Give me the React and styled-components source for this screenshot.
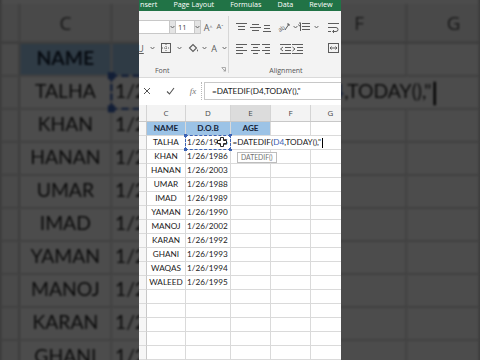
import React from 'react';
import styled, { createGlobalStyle } from 'styled-components';

const GlobalStyle = createGlobalStyle`
  html, body { margin: 0; padding: 0; background: #3b3b3b; }
  body { width: 480px; height: 360px; overflow: hidden; font-family: Lato, "Liberation Sans", sans-serif; }
`;

const UI_FONT = `"Open Sans", "Noto Sans", "Liberation Sans", sans-serif`;
const CELL_FONT = `Lato, "Liberation Sans", sans-serif`;
const GREEN = '#217346';
const ICON = '#5c5c5c';
const REF = '#3c63b4';

const TABS = ['nsert', 'Page Layout', 'Formulas', 'Data', 'Review'];
const COLS = [
  { key: 'h', w: 8 },
  { key: 'C', w: 39 },
  { key: 'D', w: 45 },
  { key: 'E', w: 40 },
  { key: 'F', w: 40 },
  { key: 'G', w: 40 },
];
const PEOPLE = [
  ['TALHA', '1/26/1985'],
  ['KHAN', '1/26/1986'],
  ['HANAN', '1/26/2003'],
  ['UMAR', '1/26/1988'],
  ['IMAD', '1/26/1989'],
  ['YAMAN', '1/26/1990'],
  ['MANOJ', '1/26/2002'],
  ['KARAN', '1/26/1992'],
  ['GHANI', '1/26/1993'],
  ['WAQAS', '1/26/1994'],
  ['WALEED', '1/26/1995'],
];
const EMPTY_ROWS = 7;

/* ---------- page frame ---------- */
const Stage = styled.div`
  position: relative;
  width: 480px;
  height: 360px;
  overflow: hidden;
  background: #3b3b3b;
  display: flex;
  justify-content: center;
`;

const Backdrop = styled.div`
  position: absolute;
  inset: 0;
  display: flex;
  justify-content: center;
  filter: brightness(0.3) blur(1.3px);
  pointer-events: none;
`;

const Zoomed = styled.div`
  transform-origin: 101px 179.4px;
  transform: scale(2.36);
`;

const Front = styled.div`
  position: relative;
  z-index: 1;
`;

/* ---------- sheet ---------- */
const SheetBox = styled.div`
  width: 202px;
  height: 360px;
  overflow: hidden;
  background: #fff;
  display: flex;
  flex-direction: column;
`;

const TabBar = styled.div`
  flex: none;
  height: 11px;
  background: ${GREEN};
  display: flex;
  align-items: flex-start;
  gap: 16px;
  padding-left: 1px;
  overflow: hidden;
`;

const Tab = styled.span`
  flex: none;
  font-family: ${UI_FONT};
  font-size: 7.2px;
  line-height: 8px;
  color: #fff;
  white-space: nowrap;
`;

const Ribbon = styled.div`
  flex: none;
  height: 67px;
  background: #f3f3f3;
  border-bottom: 1px solid #dadada;
  box-sizing: border-box;
  display: flex;
`;

const Group = styled.div`
  flex: none;
  width: ${(p) => p.$w}px;
  display: flex;
  flex-direction: column;
  padding-top: 9px;
  box-sizing: border-box;
  position: relative;
`;

const GroupRule = styled.div`
  flex: none;
  width: 1px;
  margin: 5px 0 4px;
  background: #d6d6d6;
`;

const ToolRow = styled.div`
  display: flex;
  align-items: center;
  height: 14px;
  margin-top: ${(p) => p.$mt || 0}px;
  padding-left: ${(p) => p.$pl || 0}px;
`;

const GroupLabel = styled.div`
  margin-top: 11px;
  height: 10px;
  line-height: 10px;
  font-family: ${UI_FONT};
  font-size: 7px;
  color: #555;
  padding-left: ${(p) => p.$pl || 0}px;
  text-align: ${(p) => (p.$center ? 'center' : 'left')};
`;

const Launcher = styled.span`
  position: absolute;
  right: 2px;
  bottom: 5px;
  display: flex;
`;

const InputBox = styled.div`
  flex: none;
  width: ${(p) => p.$w}px;
  height: 14px;
  box-sizing: border-box;
  background: #fff;
  border: 1px solid #c8c8c8;
  border-left: ${(p) => (p.$open ? 'none' : '1px solid #c8c8c8')};
  font-family: ${UI_FONT};
  font-size: 7.5px;
  line-height: 12px;
  padding-left: 2px;
  color: #444;
`;

const DropBtn = styled.div`
  flex: none;
  width: 6px;
  height: 14px;
  box-sizing: border-box;
  background: #e4e4e4;
  border: 1px solid #c8c8c8;
  border-left: none;
  display: flex;
  align-items: center;
  justify-content: center;
`;

const Slot = styled.div`
  flex: none;
  width: ${(p) => p.$w}px;
  margin-left: ${(p) => p.$ml || 0}px;
  height: 14px;
  display: flex;
  align-items: center;
  justify-content: center;
  color: ${ICON};
  font-family: ${UI_FONT};
`;

const Glyph = styled.span`
  font-size: ${(p) => p.$size}px;
  line-height: 1;
  color: ${ICON};
  text-decoration: ${(p) => (p.$under ? 'underline' : 'none')};
`;

const FormulaBar = styled.div`
  flex: none;
  height: 25px;
  display: flex;
  align-items: center;
  background: #fff;
`;

const FxDivider = styled.div`
  flex: none;
  width: 0;
  height: 18px;
  border-left: 1px dotted #b8b8b8;
`;

const FxLabel = styled.span`
  font-family: "Liberation Serif", serif;
  font-style: italic;
  font-size: 9px;
  color: #777;
`;

const FxInput = styled.div`
  flex: 1;
  height: 18px;
  margin-left: 2px;
  box-sizing: border-box;
  border: 1px solid #c8c8c8;
  border-right: none;
  background: #fff;
  font-family: ${CELL_FONT};
  font-size: 8.2px;
  line-height: 16px;
  padding-left: 7px;
  color: #1a1a1a;
  white-space: nowrap;
`;

const HeaderRow = styled.div`
  flex: none;
  display: flex;
  height: 17px;
  margin-top: 2px;
  background: #f3f3f3;
  border-bottom: 1px solid #c8c8c8;
  box-sizing: border-box;
`;

const HeadCell = styled.div`
  flex: none;
  width: ${(p) => p.$w}px;
  box-sizing: border-box;
  border-right: 1px solid #d4d4d4;
  background: ${(p) => (p.$active ? '#dcdcdc' : 'transparent')};
  text-align: center;
  font-family: ${UI_FONT};
  font-size: 8px;
  line-height: 16px;
  color: #4a4a4a;
`;

const Row = styled.div`
  flex: none;
  display: flex;
  height: 14px;
`;

const Cell = styled.div`
  flex: none;
  position: relative;
  width: ${(p) => p.$w}px;
  height: 14px;
  box-sizing: border-box;
  border-right: 1px solid ${(p) => (p.$head ? '#c8c8c8' : '#dadada')};
  border-bottom: 1px solid #dadada;
  background: ${(p) => (p.$fill ? p.$fill : p.$head ? '#f6f6f6' : '#fff')};
  font-family: ${CELL_FONT};
  font-size: 8.2px;
  line-height: 13px;
  font-weight: ${(p) => (p.$bold ? 700 : 400)};
  color: ${(p) => (p.$bold ? '#15233a' : '#222')};
  text-align: ${(p) => p.$align || 'left'};
  padding: 0 ${(p) => (p.$align === 'right' ? 3 : 1)}px 0 1px;
  white-space: nowrap;
  box-shadow: ${(p) => (p.$active ? `inset 0 -1px 0 ${GREEN}` : 'none')};
`;

const RefBox = styled.div`
  position: absolute;
  left: -1px;
  top: -1px;
  right: -1px;
  bottom: -1px;
  border: 1px dashed ${REF};
  pointer-events: none;
  z-index: 2;
`;

const Handle = styled.span`
  position: absolute;
  width: 3px;
  height: 3px;
  background: ${REF};
  ${(p) => (p.$top ? 'top: -2px;' : 'bottom: -2px;')}
  ${(p) => (p.$left ? 'left: -2px;' : 'right: -2px;')}
`;

const CursorMark = styled.span`
  position: absolute;
  left: 31px;
  top: 1px;
  z-index: 4;
  display: flex;
`;

const EditText = styled.div`
  position: absolute;
  left: 0;
  top: 0;
  height: 13px;
  padding-left: 1.5px;
  padding-right: 1px;
  background: #fff;
  z-index: 3;
  white-space: nowrap;
  display: flex;
  align-items: center;
  line-height: 13px;
`;

const RefText = styled.span`
  color: ${REF};
`;

const TextCaret = styled.span`
  display: inline-block;
  width: 1px;
  height: 10px;
  margin-left: 1px;
  background: #000;
`;

const Tooltip = styled.div`
  position: absolute;
  left: 6px;
  top: 16px;
  z-index: 5;
  padding: 0 3px;
  height: 11px;
  box-sizing: border-box;
  background: #fff;
  border: 1px solid #bdbdbd;
  font-family: ${CELL_FONT};
  font-size: 6.8px;
  line-height: 9px;
  color: #6f6f6f;
`;

/* ---------- icons ---------- */
const Caret = () => (
  <svg width="5" height="4" viewBox="0 0 5 4">
    <path d="M0.6 1 L2.5 3 L4.4 1" fill="none" stroke="#666" strokeWidth="1" />
  </svg>
);

const Lines = ({ rows, w = 11, h = 11 }) => (
  <svg width={w} height={h} viewBox={`0 0 ${w} ${h}`}>
    {rows.map(([y, x1, x2], i) => (
      <line key={i} x1={x1} y1={y + 0.5} x2={x2} y2={y + 0.5} stroke={ICON} strokeWidth="1" />
    ))}
  </svg>
);

const BordersIcon = () => (
  <svg width="10" height="10" viewBox="0 0 10 10">
    <rect x="0.5" y="0.5" width="9" height="9" fill="none" stroke={ICON} strokeWidth="1" />
    <line x1="5" y1="1" x2="5" y2="9" stroke={ICON} strokeWidth="0.9" strokeDasharray="1 1" />
    <line x1="1" y1="5" x2="9" y2="5" stroke={ICON} strokeWidth="0.9" strokeDasharray="1 1" />
  </svg>
);

const BucketIcon = () => (
  <svg width="11" height="10" viewBox="0 0 11 10">
    <path d="M1.5 5 L5 1.5 L8.5 5 L5 8.5 Z" fill="none" stroke={ICON} strokeWidth="1.1" />
    <path d="M9.5 6 Q10.7 7.7 9.5 8.7 Q8.3 7.7 9.5 6 Z" fill={ICON} />
  </svg>
);

const LauncherIcon = () => (
  <svg width="5" height="5" viewBox="0 0 5 5">
    <path d="M0.5 0.5 H4.5 V4.5" fill="none" stroke="#999" strokeWidth="0.8" />
    <path d="M1 1 L4 4 M2.5 4 H4 V2.5" fill="none" stroke="#999" strokeWidth="0.8" />
  </svg>
);

const OrientIcon = () => (
  <svg width="12" height="10" viewBox="0 0 12 10">
    <text x="0" y="9" fontSize="6" fill={ICON} fontFamily="Open Sans" transform="rotate(-35 3 7)">ab</text>
    <path d="M7 8 L11 2 M9 2 H11 V4" fill="none" stroke={ICON} strokeWidth="1" />
  </svg>
);

const IndentIcon = ({ dir }) => (
  <svg width="11" height="11" viewBox="0 0 11 11">
    <line x1="0" y1="1.5" x2="11" y2="1.5" stroke={ICON} />
    <line x1="5" y1="4.5" x2="11" y2="4.5" stroke={ICON} />
    <line x1="5" y1="7.5" x2="11" y2="7.5" stroke={ICON} />
    <line x1="0" y1="10.5" x2="11" y2="10.5" stroke={ICON} />
    <path d={dir === 'in' ? 'M0.5 4 L3 6 L0.5 8' : 'M3 4 L0.5 6 L3 8'} fill="none" stroke={ICON} strokeWidth="1" />
  </svg>
);

const ParaIcon = () => (
  <svg width="12" height="10" viewBox="0 0 12 10">
    <line x1="4" y1="1.5" x2="12" y2="1.5" stroke={ICON} />
    <line x1="4" y1="4.5" x2="12" y2="4.5" stroke={ICON} />
    <line x1="4" y1="7.5" x2="12" y2="7.5" stroke={ICON} />
    <path d="M2.5 1 V9 M1 1 H3 M0.5 2.5 Q0.5 4 2.5 4" fill="none" stroke={ICON} strokeWidth="1" />
  </svg>
);

const WrapIcon = () => (
  <svg width="11" height="11" viewBox="0 0 11 11">
    <line x1="0" y1="1.5" x2="11" y2="1.5" stroke={ICON} />
    <path d="M0 5.5 H8 Q10 5.5 10 7.5 Q10 9.5 8 9.5 H5" fill="none" stroke={ICON} />
    <path d="M6 8 L4.5 9.5 L6 11" fill="none" stroke={ICON} strokeWidth="1" />
    <line x1="0" y1="9.5" x2="3" y2="9.5" stroke={ICON} />
  </svg>
);

const MergeIcon = () => (
  <svg width="11" height="10" viewBox="0 0 11 10">
    <rect x="0.5" y="0.5" width="10" height="9" fill="none" stroke={ICON} />
    <path d="M2 5 H9 M3.5 3.5 L2 5 L3.5 6.5 M7.5 3.5 L9 5 L7.5 6.5" fill="none" stroke={ICON} strokeWidth="1" />
  </svg>
);

const CloseIcon = () => (
  <svg width="8" height="8" viewBox="0 0 8 8">
    <path d="M1 1 L7 7 M7 1 L1 7" stroke="#555" strokeWidth="1" />
  </svg>
);

const CheckIcon = () => (
  <svg width="9" height="8" viewBox="0 0 9 8">
    <path d="M1 4.5 L3.5 7 L8 1" fill="none" stroke="#555" strokeWidth="1.1" />
  </svg>
);

const FatCross = () => (
  <svg width="10" height="10" viewBox="0 0 10 10">
    <path
      d="M3.5 0.5 H6.5 V3.5 H9.5 V6.5 H6.5 V9.5 H3.5 V6.5 H0.5 V3.5 H3.5 Z"
      fill="#fff"
      stroke="#111"
      strokeWidth="0.9"
    />
  </svg>
);

/* ---------- sheet composition ---------- */
function Ribbons() {
  return (
    <Ribbon>
      <Group $w={89}>
        <ToolRow>
          <InputBox $w={31} $open />
          <DropBtn><Caret /></DropBtn>
          <InputBox $w={19} $open>11</InputBox>
          <DropBtn><Caret /></DropBtn>
          <Slot $w={14}><Glyph $size={9}>A</Glyph><Glyph $size={5}>^</Glyph></Slot>
          <Slot $w={10}><Glyph $size={7.5}>A</Glyph><Glyph $size={5}>ˇ</Glyph></Slot>
        </ToolRow>
        <ToolRow $mt={7}>
          <Slot $w={11} $ml={-4}><Glyph $size={9} $under>U</Glyph></Slot>
          <Slot $w={13}><Caret /></Slot>
          <Slot $w={13}><BordersIcon /></Slot>
          <Slot $w={14}><Caret /></Slot>
          <Slot $w={14}><BucketIcon /></Slot>
          <Slot $w={9}><Caret /></Slot>
          <Slot $w={10}><Glyph $size={9}>A</Glyph></Slot>
          <Slot $w={11}><Caret /></Slot>
        </ToolRow>
        <GroupLabel $pl={16}>Font</GroupLabel>
        <Launcher><LauncherIcon /></Launcher>
      </Group>
      <GroupRule />
      <Group $w={114}>
        <ToolRow $pl={5}>
          <Slot $w={14}><Lines rows={[[1, 0, 11], [4, 2, 9], [7, 2, 9]]} /></Slot>
          <Slot $w={14}><Lines rows={[[2, 2, 9], [5, 0, 11], [8, 2, 9]]} /></Slot>
          <Slot $w={10}><Lines w={8} rows={[[3, 1, 7], [6, 1, 7], [9, 0, 8]]} /></Slot>
          <Slot $w={16} $ml={4}><OrientIcon /></Slot>
          <Slot $w={6}><Caret /></Slot>
          <Slot $w={12}><ParaIcon /></Slot>
          <Slot $w={12}><Caret /></Slot>
          <Slot $w={22}><WrapIcon /></Slot>
        </ToolRow>
        <ToolRow $mt={7} $pl={5}>
          <Slot $w={15}><Lines rows={[[1, 0, 11], [4, 0, 7], [7, 0, 11], [10, 0, 7]]} /></Slot>
          <Slot $w={12}><Lines w={9} rows={[[1, 0, 9], [4, 2, 7], [7, 0, 9], [10, 2, 7]]} /></Slot>
          <Slot $w={10}><Lines w={8} rows={[[1, 0, 8], [4, 3, 8], [7, 0, 8], [10, 3, 8]]} /></Slot>
          <Slot $w={12} $ml={8}><IndentIcon dir="out" /></Slot>
          <Slot $w={12}><IndentIcon dir="in" /></Slot>
          <Slot $w={16} $ml={22}><MergeIcon /></Slot>
        </ToolRow>
        <GroupLabel $center>Alignment</GroupLabel>
      </Group>
    </Ribbon>
  );
}

function DataRow({ name, dob, first }) {
  return (
    <Row>
      <Cell $w={COLS[0].w} $head />
      <Cell $w={COLS[1].w} $align="center">{name}</Cell>
      <Cell $w={COLS[2].w} $align="right">
        {dob}
        {first && (
          <>
            <RefBox>
              <Handle $top $left />
              <Handle $top />
              <Handle $left />
              <Handle />
            </RefBox>
            <CursorMark><FatCross /></CursorMark>
          </>
        )}
      </Cell>
      <Cell $w={COLS[3].w} $active={first}>
        {first && (
          <>
            <EditText>
              =DATEDIF(<RefText>D4</RefText>,TODAY(),"<TextCaret />
            </EditText>
            <Tooltip>DATEDIF()</Tooltip>
          </>
        )}
      </Cell>
      <Cell $w={COLS[4].w} />
      <Cell $w={COLS[5].w} />
    </Row>
  );
}

function Sheet() {
  return (
    <SheetBox>
      <TabBar>
        {TABS.map((t) => (
          <Tab key={t}>{t}</Tab>
        ))}
      </TabBar>
      <Ribbons />
      <FormulaBar>
        <Slot $w={16}><CloseIcon /></Slot>
        <Slot $w={30}><CheckIcon /></Slot>
        <Slot $w={16}><FxLabel>fx</FxLabel></Slot>
        <FxDivider />
        <FxInput>=DATEDIF(D4,TODAY(),"</FxInput>
      </FormulaBar>
      <HeaderRow>
        {COLS.map((c) => (
          <HeadCell key={c.key} $w={c.w} $active={c.key === 'E'}>
            {c.key === 'h' ? '' : c.key}
          </HeadCell>
        ))}
      </HeaderRow>
      <Row>
        <Cell $w={COLS[0].w} $head />
        <Cell $w={COLS[1].w} $align="center" $bold $fill="#9cc3e6">NAME</Cell>
        <Cell $w={COLS[2].w} $align="center" $bold $fill="#9cc3e6">D.O.B</Cell>
        <Cell $w={COLS[3].w} $align="center" $bold $fill="#9cc3e6">AGE</Cell>
        <Cell $w={COLS[4].w} />
        <Cell $w={COLS[5].w} />
      </Row>
      {PEOPLE.map(([n, d], i) => (
        <DataRow key={n} name={n} dob={d} first={i === 0} />
      ))}
      {Array.from({ length: EMPTY_ROWS }).map((_, i) => (
        <Row key={`e${i}`}>
          {COLS.map((c) => (
            <Cell key={c.key} $w={c.w} $head={c.key === 'h'} />
          ))}
        </Row>
      ))}
    </SheetBox>
  );
}

export default function App() {
  return (
    <>
      <GlobalStyle />
      <Stage>
        <Backdrop aria-hidden="true">
          <Zoomed>
            <Sheet />
          </Zoomed>
        </Backdrop>
        <Front>
          <Sheet />
        </Front>
      </Stage>
    </>
  );
}
